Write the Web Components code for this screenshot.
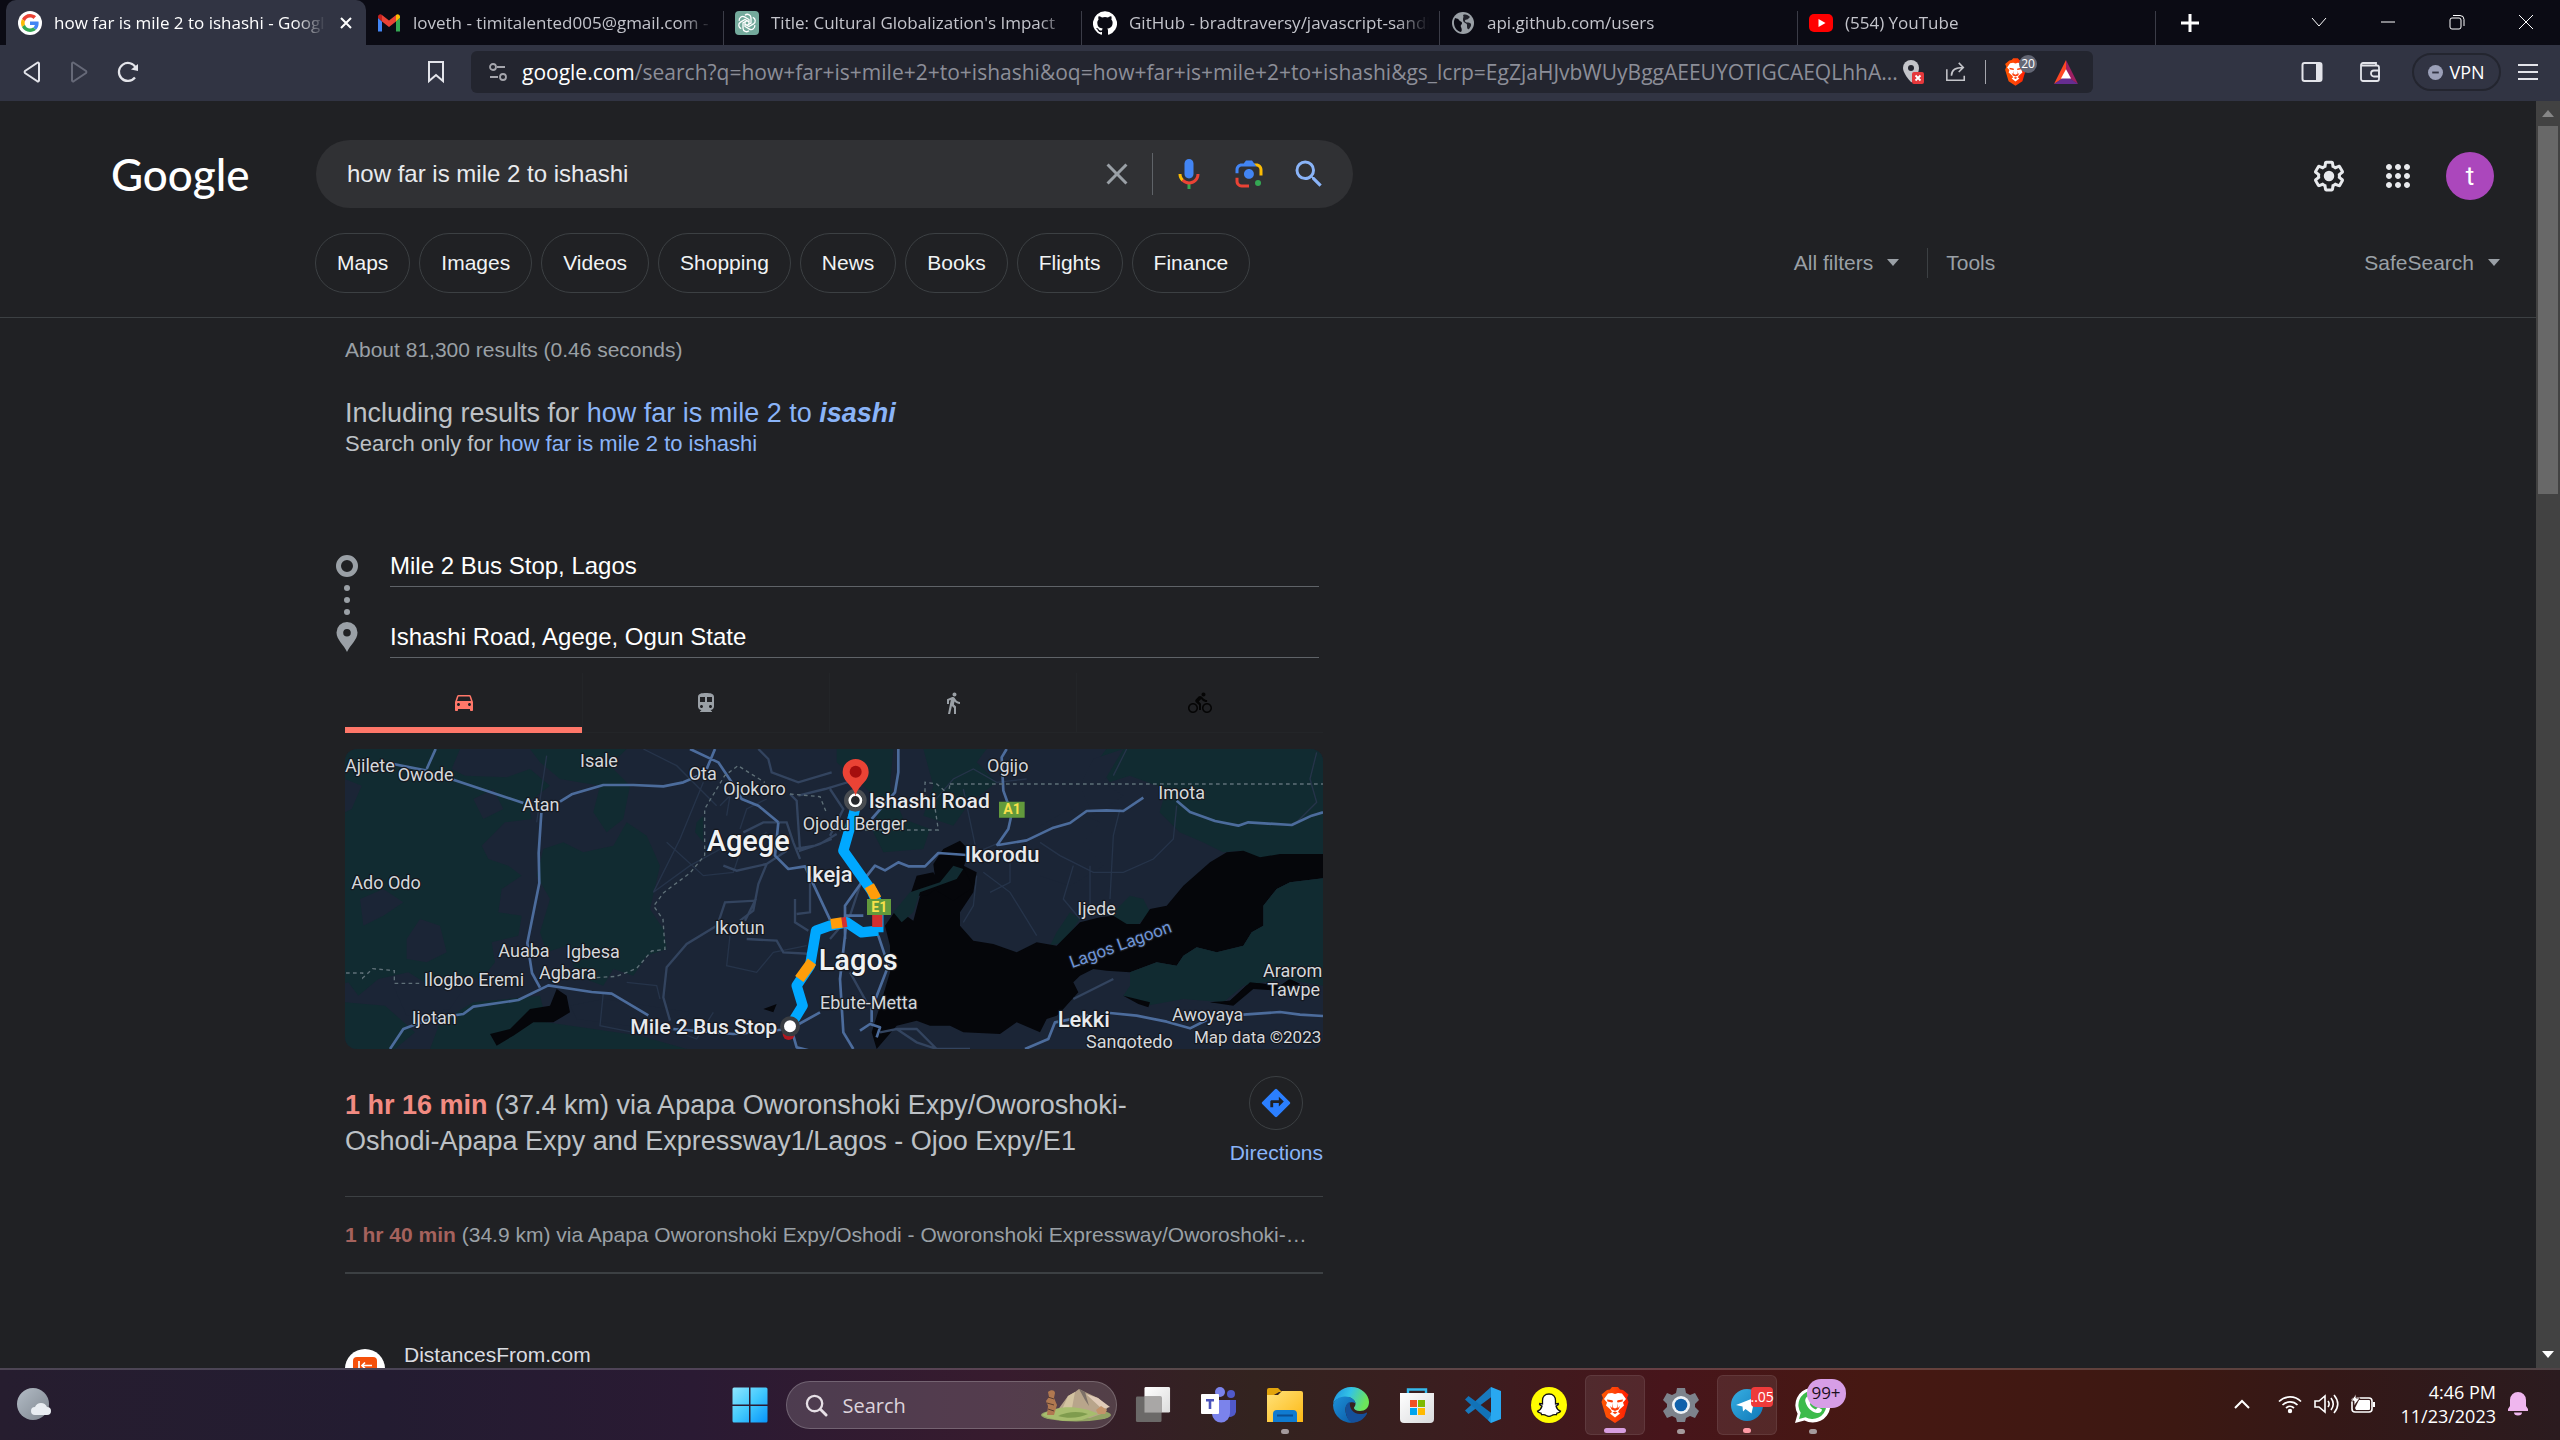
<!DOCTYPE html>
<html lang="en">
<head>
<meta charset="utf-8">
<title>how far is mile 2 to ishashi - Google Search</title>
<style>
html,body{margin:0;height:100%}
body{display:flex;flex-direction:column;height:100vh;overflow:hidden;background:#202124;color:#bdc1c6;font-family:"Liberation Sans",Arial,sans-serif}
</style>
</head>
<body>
<tab-strip></tab-strip>
<address-bar></address-bar>
<page-view></page-view>
<task-bar></task-bar>

<script>
const ICONS = {
google:['0 0 48 48','<circle cx="24" cy="24" r="24" fill="#fff"/><g transform="translate(6 6) scale(.75)"><path fill="#EA4335" d="M24 9.5c3.54 0 6.71 1.22 9.21 3.6l6.85-6.85C35.9 2.38 30.47 0 24 0 14.62 0 6.51 5.38 2.56 13.22l7.98 6.19C12.43 13.72 17.74 9.5 24 9.5z"/><path fill="#4285F4" d="M46.98 24.55c0-1.57-.15-3.09-.38-4.55H24v9.02h12.94c-.58 2.96-2.26 5.48-4.78 7.18l7.73 6c4.51-4.18 7.09-10.36 7.09-17.65z"/><path fill="#FBBC05" d="M10.53 28.59c-.48-1.45-.76-2.99-.76-4.59s.27-3.14.76-4.59l-7.98-6.19C.92 16.46 0 20.12 0 24s.92 7.54 2.56 10.78l7.97-6.19z"/><path fill="#34A853" d="M24 48c6.48 0 11.93-2.13 15.89-5.81l-7.73-6c-2.15 1.45-4.92 2.3-8.16 2.3-6.26 0-11.57-4.22-13.47-9.91l-7.98 6.19C6.51 42.62 14.62 48 24 48z"/></g>'],
gmail:['0 0 24 24','<path fill="#4285F4" d="M1 20.5h4v-10L1 6.8z"/><path fill="#34A853" d="M19 20.5h4V6.8l-4 3.7z"/><path fill="#EA4335" d="M5 10.5V4l7 5.4L19 4v6.500l-7 5.500z"/><path fill="#C5221F" d="M1 6.800v-1C1 3.500 3.600 2.500 5 4v6.500z"/><path fill="#FBBC04" d="M23 6.800v-1C23 3.500 20.400 2.500 19 4v6.500z"/>'],
gpt:['0 0 24 24','<rect width="24" height="24" rx="4" fill="#74aa9c"/><g fill="none" stroke="#fff" stroke-width="1.300"><path d="M10 4.200a3.600 3.600 0 0 1 6 2.600v5.200l-4 2.300"/><path d="M10 4.200a3.600 3.600 0 0 1 6 2.600v5.200l-4 2.300" transform="rotate(60 12 12)"/><path d="M10 4.200a3.600 3.600 0 0 1 6 2.600v5.200l-4 2.300" transform="rotate(120 12 12)"/><path d="M10 4.200a3.600 3.600 0 0 1 6 2.600v5.200l-4 2.300" transform="rotate(180 12 12)"/><path d="M10 4.200a3.600 3.600 0 0 1 6 2.600v5.200l-4 2.300" transform="rotate(240 12 12)"/><path d="M10 4.200a3.600 3.600 0 0 1 6 2.600v5.200l-4 2.300" transform="rotate(300 12 12)"/></g>'],
github:['0 0 24 24','<path fill="#fff" d="M12 .3a12 12 0 0 0-3.800 23.400c.6.1.8-.3.8-.6v-2c-3.300.7-4-1.600-4-1.600-.6-1.400-1.400-1.800-1.400-1.800-1-.7.1-.7.1-.7 1.200 0 1.900 1.200 1.900 1.200 1 1.800 2.800 1.300 3.500 1 0-.8.400-1.300.7-1.600-2.700-.3-5.500-1.300-5.500-6 0-1.200.5-2.300 1.300-3.100-.2-.4-.6-1.600 0-3.200 0 0 1-.3 3.400 1.200a11.500 11.500 0 0 1 6 0c2.300-1.500 3.300-1.200 3.300-1.200.6 1.600.2 2.800 0 3.200.9.8 1.300 1.900 1.300 3.200 0 4.600-2.800 5.600-5.500 5.900.5.400.9 1 .9 2.200v3.300c0 .3.100.7.8.6A12 12 0 0 0 12 .3"/>'],
globe:['0 0 24 24','<circle cx="12" cy="12" r="11" fill="#9aa0a6"/><path fill="#0b0b14" d="M4 7c2 1 3 0 4 2s3 1 3 3-2 2-1 4 1 4 0 5C5 20 2.500 15 3 10z"/><path fill="#0b0b14" d="M12 4c3-1 5 0 7 2l-2 2c-1 1-3 0-3 2s3 1 5 2 1 4-1 6c-2 1-2-2-2-4s-4-2-4-5 1-3 0-5z" opacity=".85"/>'],
youtube:['0 0 24 24','<rect y="3" width="24" height="18" rx="5" fill="#f00"/><path fill="#fff" d="M9.500 8v8l7-4z"/>'],
close:['0 0 16 16','<path d="M3 3l10 10M13 3L3 13" fill="none" stroke="currentColor" stroke-width="2"/>'],
closethin:['0 0 16 16','<path d="M1 1l14 14M15 1L1 15" fill="none" stroke="currentColor"/>'],
plus:['0 0 18 18','<path d="M9 0v18M0 9h18" stroke="currentColor" stroke-width="3"/>'],
chev:['0 0 16 16','<path d="M1 4l7 8 7-8" fill="none" stroke="currentColor"/>'],
min:['0 0 16 16','<path d="M1 8h14" stroke="currentColor"/>'],
restore:['0 0 16 16','<path d="M1 6a2 2 0 0 1 2-2h7a2 2 0 0 1 2 2v7a2 2 0 0 1-2 2H3a2 2 0 0 1-2-2zM4 1.500h7a4 4 0 0 1 4 4V12" fill="none" stroke="currentColor"/>'],
back:['0 0 20 24','<path d="M17 3.500v17a1 1 0 0 1-1.700.7L3 13a1.500 1.500 0 0 1 0-2L15.300 2.800a1 1 0 0 1 1.700.7z" fill="none" stroke="currentColor" stroke-width="2"/>'],
fwd:['0 0 20 24','<path d="M3 3.500v17a1 1 0 0 0 1.700.7L17 13a1.500 1.500 0 0 0 0-2L4.700 2.800A1 1 0 0 0 3 3.500z" fill="none" stroke="currentColor" stroke-width="2"/>'],
reload:['0 0 24 24','<path d="M19 17.500A9 9 0 1 1 20 8" fill="none" stroke="currentColor" stroke-width="2.200"/><path d="M22 4v7l-7-1.500z" fill="currentColor"/>'],
bookmark:['0 0 18 24','<path d="M2 2h14v19l-7-6-7 6z" fill="none" stroke="currentColor" stroke-width="2"/>'],
tune:['0 0 20 20','<g fill="none" stroke="currentColor" stroke-width="1.800"><circle cx="5" cy="5" r="3"/><path d="M9 5h8M2 15h8"/><circle cx="15" cy="15" r="3"/></g>'],
locblock:['0 0 24 26','<path d="M10 1a8 8 0 0 0-8 8c0 5 6 12 8 14s8-9 8-14a8 8 0 0 0-8-8z" fill="#c4c5ca"/><circle cx="10" cy="9" r="3" fill="#23252f"/><rect x="11" y="13" width="12" height="12" rx="2" fill="#e5383b"/><path d="M14.500 16.500l5 5m0-5l-5 5" stroke="#fff" stroke-width="1.800"/>'],
share:['0 0 24 24','<g fill="none" stroke="currentColor" stroke-width="1.700"><path d="M2 9v12h19v-5"/><path d="M7 16c0-7 5-9 13-9M15 2l5 5-5 5"/></g>'],
brave:['0 0 30 36','<defs><linearGradient id="g" x2="1"><stop stop-color="#ff5500"/><stop offset=".45" stop-color="#ff4608"/><stop offset="1" stop-color="#ff1a00"/></linearGradient></defs><path d="M7 3l3-.500L12 0h6l2 2.500 3 .500 5.500 4.500L27 11l1.500 4L24 30l-9 6-9-6L1.500 15 3 11 1.500 7.500z" fill="url(#g)"/><path d="M15 7l3-1 4 .500 4 5.500-3 3.500 1 3-4.500 4-1.500 2.500 2 1.500-5 4-5-4 2-1.500L10.500 22.500 6 18.500l1-3L4 12l4-5.500L12 6z" fill="#fff"/><path d="M7 12.500l5.500.8.500 1.700-1 .5-4.500-1zM23 12.500l-5.500.8-.500 1.700 1 .5 4.500-1zM13 16l-.800 5-2.200-2 1.500 3.500 3.500 1.500 3.500-1.500L20 19l-2.200 2-.800-5v4.500l-2 1-2-1zM12.500 25.500l2.500-1 2.500 1-2.500 1.500z" fill="#fb3f0c"/>'],
bat:['0 0 26 26','<path d="M13 0L0 26l13-8z" fill="#ff4724"/><path d="M13 0l13 26-13-8z" fill="#9e1f63"/><path d="M0 26h26l-13-9z" fill="#662d91"/><path d="M13 10l-5.500 10h11z" fill="#fff"/>'],
sidebar:['0 0 22 22','<rect x="1.500" y="2" width="19" height="18" rx="2" fill="none" stroke="currentColor" stroke-width="2"/><path d="M15 2h5v18h-5z" fill="currentColor"/>'],
wallet:['0 0 22 22','<g fill="none" stroke="currentColor" stroke-width="1.800"><path d="M2 4.500h16a2 2 0 0 1 2 2V18a2 2 0 0 1-2 2H4a2 2 0 0 1-2-2V4a2 2 0 0 1 2-2h13v2"/><path d="M20 9.500h-5a3 3 0 0 0 0 6h5z"/></g>'],
menu:['0 0 20 18','<path d="M0 2h20M0 9h20M0 16h20" stroke="currentColor" stroke-width="2"/>'],
vpn:['0 0 16 16','<circle cx="8" cy="8" r="8" fill="#9ba0b8"/><path d="M4.500 8h7" stroke="#313443" stroke-width="2"/>'],
x:['0 0 24 24','<path fill="currentColor" d="M19 6.410L17.590 5 12 10.590 6.410 5 5 6.410 10.590 12 5 17.590 6.410 19 12 13.410 17.590 19 19 17.590 13.410 12z"/>'],
mic:['0 0 24 24','<path fill="#4285f4" d="M12 15c1.660 0 3-1.310 3-2.970v-7.020c0-1.660-1.340-3.010-3-3.010s-3 1.340-3 3.010v7.020c0 1.660 1.340 2.970 3 2.970z"/><path fill="#34a853" d="M11 18.080h2v3.920h-2z"/><path fill="#fbbc04" d="M7.050 16.870c-1.270-1.330-2.050-2.830-2.050-4.870h2c0 1.450.56 2.420 1.470 3.380v.32l-1.150 1.180z"/><path fill="#ea4335" d="M12 16.930a4.970 5.250 0 0 1-3.540-1.550l-1.410 1.490c1.260 1.340 3.020 2.130 4.950 2.130 3.870 0 6.990-2.920 6.990-7h-1.990c0 2.920-2.240 4.930-5 4.930z"/>'],
lens:['0 0 192 192','<path fill="#4285f4" d="M96 64.910c-17.160 0-31.070 13.910-31.070 31.070S78.840 127.050 96 127.050s31.070-13.910 31.070-31.070S113.160 64.910 96 64.910z" transform="translate(14 14) scale(.85)"/><circle cx="144.070" cy="144" r="16" fill="#34a853"/><path fill="#ea4335" d="M24 135.200c0 18.110 14.690 32.800 32.800 32.800H96v-16l-40.100-.1c-8.800 0-15.900-8.190-15.900-17.900v-18H24v19.200z"/><path fill="#fbbc04" d="M168 72.800c0-18.110-14.690-32.800-32.800-32.800H116l20 16c8.800 0 16 8.290 16 18v30h16V72.800z"/><path fill="#4285f4" d="M112 24l-32 0-12 16H56.800C38.690 40 24 54.690 24 72.800V92h16V74c0-9.710 7.200-18 16-18h80L112 24z"/>'],
search:['0 0 24 24','<path fill="currentColor" d="M15.500 14h-.79l-.28-.27A6.470 6.470 0 0 0 16 9.500 6.500 6.500 0 1 0 9.500 16c1.610 0 3.090-.59 4.230-1.570l.27.28v.79l5 4.990L20.490 19l-4.990-5zm-6 0C7.010 14 5 11.990 5 9.500S7.010 5 9.500 5 14 7.010 14 9.500 11.990 14 9.500 14z"/>'],
gear:['0 0 24 24','<path fill="currentColor" d="M13.850 22.250h-3.700c-.74 0-1.360-.54-1.450-1.270l-.27-1.890c-.27-.14-.53-.29-.79-.46l-1.800.72c-.7.260-1.470-.03-1.810-.65L2.200 15.530c-.35-.66-.2-1.440.36-1.880l1.530-1.190c-.01-.15-.02-.3-.02-.46 0-.15.01-.31.020-.46l-1.520-1.190c-.59-.45-.74-1.260-.37-1.880l1.850-3.190c.34-.62 1.110-.9 1.790-.63l1.810.73c.26-.17.52-.32.78-.46l.27-1.910c.09-.7.71-1.250 1.440-1.250h3.700c.74 0 1.360.54 1.450 1.270l.27 1.890c.27.14.53.29.79.46l1.800-.72c.71-.26 1.480.03 1.820.65l1.840 3.180c.36.66.2 1.440-.36 1.880l-1.520 1.190c.01.15.02.3.02.46s-.01.310-.02.460l1.520 1.190c.56.450.72 1.230.37 1.860l-1.860 3.220c-.34.62-1.110.9-1.800.63l-1.800-.72c-.26.17-.52.32-.78.46l-.27 1.910c-.1.680-.72 1.220-1.460 1.220zm-3.230-2h2.760l.37-2.550.53-.22c.44-.18.88-.44 1.340-.78l.45-.34 2.380.96 1.380-2.400-2.030-1.580.07-.56c.03-.26.06-.51.06-.78s-.03-.53-.06-.78l-.07-.56 2.030-1.580-1.390-2.400-2.390.96-.45-.35c-.42-.32-.87-.58-1.330-.77l-.52-.22-.37-2.550h-2.760l-.37 2.550-.53.21c-.44.19-.88.44-1.340.79l-.45.33-2.380-.95-1.390 2.390 2.030 1.580-.07.560a7 7 0 0 0-.06.790c0 .260.02.530.06.780l.07.560-2.030 1.580 1.380 2.400 2.390-.96.45.350c.43.330.86.580 1.330.77l.53.220.38 2.550z"/><circle cx="12" cy="12" r="3.500" fill="currentColor"/>'],
apps:['0 0 24 24','<path fill="currentColor" d="M6 8c1.100 0 2-.9 2-2s-.9-2-2-2-2 .9-2 2 .9 2 2 2zm6 12c1.100 0 2-.9 2-2s-.9-2-2-2-2 .9-2 2 .9 2 2 2zm-6 0c1.100 0 2-.9 2-2s-.9-2-2-2-2 .9-2 2 .9 2 2 2zm0-6c1.100 0 2-.9 2-2s-.9-2-2-2-2 .9-2 2 .9 2 2 2zm6 0c1.100 0 2-.9 2-2s-.9-2-2-2-2 .9-2 2 .9 2 2 2zm4-8c0 1.100.9 2 2 2s2-.9 2-2-.9-2-2-2-2 .9-2 2zm-4 2c1.100 0 2-.9 2-2s-.9-2-2-2-2 .9-2 2 .9 2 2 2zm6 6c1.100 0 2-.9 2-2s-.9-2-2-2-2 .9-2 2 .9 2 2 2zm0 6c1.100 0 2-.9 2-2s-.9-2-2-2-2 .9-2 2 .9 2 2 2z"/>'],
tri:['0 0 12 8','<path d="M0 0h12L6 7z" fill="currentColor"/>'],
triup:['0 0 12 8','<path d="M0 7h12L6 0z" fill="currentColor"/>'],
car:['0 0 24 24','<path fill="currentColor" d="M18.920 5.010C18.720 4.420 18.160 4 17.500 4h-11c-.66 0-1.210.42-1.420 1.010L3 11v8c0 .55.45 1 1 1h1c.55 0 1-.45 1-1v-1h12v1c0 .55.45 1 1 1h1c.55 0 1-.45 1-1v-8l-2.080-5.990zM6.500 15c-.83 0-1.500-.67-1.500-1.500S5.670 12 6.500 12s1.500.67 1.500 1.500S7.330 15 6.500 15zm11 0c-.83 0-1.500-.67-1.500-1.500s.67-1.500 1.500-1.500 1.500.67 1.500 1.500-.67 1.500-1.500 1.500zM5 10l1.500-4.500h11L19 10H5z"/>'],
train:['0 0 24 24','<path fill="currentColor" d="M12 2c-4.420 0-8 .5-8 4v9.500C4 17.430 5.570 19 7.500 19L6 20.500v.5h12v-.5L16.500 19c1.930 0 3.500-1.570 3.500-3.500V6c0-3.500-3.580-4-8-4zM7.500 17c-.83 0-1.500-.67-1.500-1.500S6.670 14 7.500 14s1.500.67 1.500 1.500S8.330 17 7.500 17zm3.500-6H6V6h5v5zm5.500 6c-.83 0-1.500-.67-1.500-1.500s.67-1.500 1.500-1.500 1.500.67 1.500 1.500-.67 1.500-1.500 1.500zm1.500-6h-5V6h5v5z"/>'],
walk:['0 0 24 24','<path fill="currentColor" d="M13.500 5.500c1.100 0 2-.9 2-2s-.9-2-2-2-2 .9-2 2 .9 2 2 2zM9.800 8.900L7 23h2.100l1.800-8 2.100 2v6h2v-7.500l-2.100-2 .6-3C14.800 12 16.800 13 19 13v-2c-1.900 0-3.500-1-4.300-2.400l-1-1.600c-.4-.6-1-1-1.700-1-.3 0-.5.100-.8.100L6 8.300V13h2V9.600l1.800-.7"/>'],
bike:['0 0 24 24','<path fill="currentColor" d="M15.500 5.500c1.100 0 2-.9 2-2s-.9-2-2-2-2 .9-2 2 .9 2 2 2zM5 12c-2.800 0-5 2.200-5 5s2.200 5 5 5 5-2.200 5-5-2.200-5-5-5zm0 8.500c-1.900 0-3.500-1.600-3.500-3.500s1.600-3.500 3.500-3.500 3.500 1.600 3.500 3.500-1.600 3.500-3.500 3.500zm5.800-10l2.400-2.400.8.800c1.300 1.300 3 2.100 5.100 2.100V9c-1.500 0-2.700-.6-3.600-1.500l-1.900-1.900c-.5-.4-1-.6-1.600-.6s-1.100.2-1.400.6L7.800 8.400c-.4.400-.6.900-.6 1.400 0 .6.200 1.100.6 1.400L11 14v5h2v-6.200l-2.200-2.300zM19 12c-2.800 0-5 2.200-5 5s2.200 5 5 5 5-2.200 5-5-2.200-5-5-5zm0 8.500c-1.900 0-3.500-1.600-3.500-3.500s1.600-3.500 3.500-3.500 3.500 1.600 3.500 3.500-1.600 3.500-3.500 3.500z"/>'],
waypoints:['0 0 22 97','<circle cx="11" cy="11" r="8.500" fill="none" stroke="#9aa0a6" stroke-width="5"/><g fill="#9aa0a6"><circle cx="11" cy="33" r="3"/><circle cx="11" cy="45" r="3"/><circle cx="11" cy="57" r="3"/><path fill-rule="evenodd" d="M11 67a10.500 10.500 0 0 0-10.500 10.500C.5 85 8 90 11 97c3-7 10.500-12 10.500-19.500A10.500 10.500 0 0 0 11 67zm0 7a3.800 3.800 0 1 1 0 7.600 3.800 3.800 0 0 1 0-7.600z"/></g>'],
dir:['0 0 24 24','<path fill="#2b7fff" d="M21.710 11.290l-9-9a1 1 0 0 0-1.410 0l-9 9a1 1 0 0 0 0 1.410l9 9c.39.39 1.020.39 1.410 0l9-9a1 1 0 0 0 0-1.410zM14 14.500V12h-4v3H8v-4c0-.55.45-1 1-1h5V7.500l3.500 3.500-3.500 3.500z"/>'],
dist:['0 0 40 40','<circle cx="20" cy="20" r="20" fill="#fff"/><rect x="8" y="8" width="24" height="24" rx="4" fill="#f4500b"/><path d="M14 12v9M27 16.500H17m3-3l-3 3 3 3" stroke="#fff" stroke-width="1.700" fill="none"/>'],
weather:['0 0 36 34','<defs><linearGradient id="g" y2="1"><stop stop-color="#b3bcc6"/><stop offset="1" stop-color="#7f8790"/></linearGradient></defs><circle cx="16" cy="16" r="16" fill="url(#g)"/><path d="M18 27a4 4 0 0 1 0-8 6.500 6.500 0 0 1 12 0 4 4 0 0 1 0 8z" fill="#e9edf2"/>'],
win:['0 0 36 36','<defs><linearGradient id="g" x2="1" y2="1"><stop stop-color="#8fe6ff"/><stop offset=".5" stop-color="#42c9fd"/><stop offset="1" stop-color="#0795fb"/></linearGradient></defs><path fill="url(#g)" d="M2 .5h15v17H.5V2A1.500 1.500 0 0 1 2 .5zM18.500.5H34A1.500 1.500 0 0 1 35.500 2v15.500h-17zM.5 19H17v16.500H2A1.500 1.500 0 0 1 .5 34zM18.500 19h17v15a1.500 1.500 0 0 1-1.500 1.500H18.500z"/>'],
mag:['0 0 24 24','<circle cx="10" cy="10" r="8" fill="none" stroke="#e6e0e6" stroke-width="2.400"/><path d="M16 16l6 6" stroke="#e6e0e6" stroke-width="3" stroke-linecap="round"/>'],
hills:['0 0 72 34','<ellipse cx="36" cy="27" rx="35" ry="6.500" fill="#93a364"/><path d="M14 27L28 8l7-4 4-3 6 3 13 6 10 9-4 6-14 5z" fill="#b8a58b"/><path d="M39 1l6 3 4 14-4-6z" fill="#7d7168"/><path d="M28 8l7-4-3 16-12 6z" fill="#d3c3a0"/><path d="M46 6l12 4 12 9-8 2z" fill="#e0cbb8"/><path d="M2 27c14-10 38-10 56-1l-16 6c-14 2-32 0-40-5z" fill="#a7bd6e"/><path d="M18 28c10-5 22-5 30-2-8 4-20 5-30 2z" fill="#7f9c4e"/><path d="M8 4c3-3 7-2 7 1l-1 5 3 7-3 10H7l1-9-2-5 3-4z" fill="#b07850"/><path d="M8 9l6 2M7 15l7 2M8 21l6 2" stroke="#5a3d2f"/><path d="M56 22l5-4 6 4-2 4h-7z" fill="#c4946a"/>'],
taskview:['0 0 36 38','<defs><linearGradient id="g" y2="1"><stop stop-color="#fff"/><stop offset="1" stop-color="#dcdcdc"/></linearGradient></defs><rect x="9" width="27" height="27" rx="1.500" fill="url(#g)"/><rect y="10" width="27" height="27" rx="1.500" fill="#6b6968"/><path d="M9 10h18v17H9z" fill="#a9a7a6"/>'],
teams:['0 0 36 36','<circle cx="30" cy="7" r="4" fill="#5059c9"/><path d="M24 13h11v12a6 6 0 0 1-9 4z" fill="#5059c9"/><circle cx="19" cy="5" r="5" fill="#7b83eb"/><path d="M11 13h18v13a9 9 0 0 1-18 1z" fill="#7b83eb"/><rect y="7" width="18" height="20" rx="1" fill="#fff"/><path d="M5 12h8v2.500h-2.700V22H7.700v-7.500H5z" fill="#4b53bc"/>'],
folder:['0 0 36 36','<defs><linearGradient id="g" x2="1" y2="1"><stop stop-color="#ffe27a"/><stop offset="1" stop-color="#fdb813"/></linearGradient></defs><path d="M0 3a2 2 0 0 1 2-2h9l4 4h-3L0 12z" fill="#e2a40c"/><path d="M0 8h11l4-4h19a2 2 0 0 1 2 2v29H0z" fill="url(#g)"/><path d="M6 35V27a4 4 0 0 1 4-4h16a4 4 0 0 1 4 4v8z" fill="#0f7bd1"/><path d="M10 28.500h16" stroke="#0a4f93" stroke-width="2"/>'],
edge:['0 0 36 36','<defs><linearGradient id="g" x2="1" y2=".3"><stop stop-color="#1b8de0"/><stop offset=".5" stop-color="#33c3e6"/><stop offset="1" stop-color="#6ce45a"/></linearGradient><linearGradient id="h" y2="1"><stop stop-color="#1c90d8"/><stop offset="1" stop-color="#0c59a4"/></linearGradient></defs><path d="M0 17C1 7 9 0 18 0c11 0 18 8 18 15 0 6-4 9-9 9-4 0-6-1.500-6-3 0-1.200 1.500-1.500 1.500-4.500 0-3-4-6.500-9-6.500S2 12 0 17z" fill="url(#g)"/><path d="M0 18c1-5 6-8.500 12-8.500 6 0 10.500 3.500 10.500 7-3-2.500-10-1-10 6C12.500 30 17 36 23 35A18 18 0 0 1 0 18z" fill="url(#h)"/><path d="M12.500 22c0-4 2-6.500 4.500-7-1 6 3 12 10 12 3 0 5-.5 6.500-1.500 1 0 .5 1 0 2-3 5-8 8-13 8s-8-7-8-13.500z" fill="#154f9a"/>'],
store:['0 0 36 36','<defs><linearGradient id="g" y2="1"><stop stop-color="#fff"/><stop offset="1" stop-color="#d9dadc"/></linearGradient></defs><path d="M9 8V2.500h18V8" fill="none" stroke="#35b9ec" stroke-width="2.400"/><path d="M1 6h34v26a4 4 0 0 1-4 4H5a4 4 0 0 1-4-4z" fill="url(#g)"/><path d="M11 13h7v7h-7z" fill="#f25022"/><path d="M19 13h7v7h-7z" fill="#7fba00"/><path d="M11 21h7v7h-7z" fill="#00a4ef"/><path d="M19 21h7v7h-7z" fill="#ffb900"/>'],
vscode:['0 0 36 36','<path d="M26 0L0 23.500l3.500 3.500L29 8z" fill="#1879bd"/><path d="M26 36L0 12.500 3.500 9 29 28z" fill="#1172b8"/><path d="M26 0l10 4v28l-10 4z" fill="#29a8f0"/><path d="M26 0v36l-3-3 3-5V8z" fill="#1e96dd"/>'],
snap:['0 0 36 36','<circle cx="18" cy="18" r="18" fill="#fffc00"/><path d="M18 7c4.500 0 6.500 3.300 6.500 6.500v3.500l2.800-.5c.8 1-1 2-2.300 2.500.8 3 2.500 4.500 4.500 5.200-.2 1.300-2 1.600-3.500 1.900l-.6 1.600c-2-.3-3.400-.2-4.600.8-1.500 1-4.100 1-5.600 0-1.200-1-2.600-1.100-4.600-.8l-.6-1.600c-1.500-.3-3.300-.6-3.500-1.900 2-.7 3.700-2.200 4.500-5.200-1.300-.5-3.100-1.500-2.300-2.500l2.800.5v-3.500C11.500 10.300 13.500 7 18 7z" fill="#fff" stroke="#111" stroke-width="1.300"/>'],
settings:['0 0 36 36','<path d="M14 1h8l1 5 4 2 5-2 4 7-4 4v3l4 4-4 7-5-2-4 2-1 4h-8l-1-4-4-2-5 2-4-7 4-4v-3L0 13l4-7 5 2 4-2z" fill="#7d838c"/><circle cx="18" cy="18" r="9" fill="#eef2f6"/><circle cx="18" cy="18" r="6.300" fill="#1061ab"/>'],
telegram:['0 0 36 36','<defs><linearGradient id="g" y2="1"><stop stop-color="#37aee2"/><stop offset="1" stop-color="#1079b8"/></linearGradient></defs><circle cx="18" cy="18" r="16" fill="url(#g)"/><path d="M7 18l19-7.500-3.500 16-6-4.500-2.500 2.500-.5-5z" fill="#fff"/>'],
whatsapp:['0 0 36 36','<path d="M0 36l2.600-9.300A17.500 17.500 0 1 1 9.500 33.500z" fill="#fff"/><path d="M4 32l1.700-6.300A14 14 0 1 1 10.500 30.200z" fill="#3dbb4b"/><path d="M13 9.500c-1 0-3.500 2-2.500 5.500 1.500 5.500 6 10 11.500 11 3 .5 5-1.500 5-3.500l-4-2.200-2.200 2.200c-3-1-5-3-6-5.500l2-2.200-1.800-5.300z" fill="#fff"/>'],
up:['0 0 18 12','<path d="M2 10l7-7 7 7" fill="none" stroke="#fff" stroke-width="2"/>'],
wifi:['0 0 24 20','<g fill="none" stroke="#fff" stroke-width="1.700"><path d="M1 7.500a15.500 15.500 0 0 1 22 0M4.500 11a10.500 10.500 0 0 1 15 0M8 14a6 6 0 0 1 8 0"/></g><circle cx="12" cy="17" r="2.200" fill="#fff"/>'],
vol:['0 0 25 20','<g fill="none" stroke="#fff" stroke-width="1.600"><path d="M1 7h4l6-5v16l-6-5H1z"/><path d="M14 7c1.500 2 1.500 4 0 6M17 4c3 4 3 8 0 12M20 1c5 6 5 12 0 18"/></g>'],
batt:['0 0 24 20','<rect x="1" y="4" width="20" height="14" rx="3" fill="none" stroke="#fff" stroke-width="1.600"/><path d="M8 6h10a1 1 0 0 1 1 1v8a1 1 0 0 1-1 1H5l-1-2zM22 8h2v5h-2z" fill="#fff"/><path d="M5 0L0 7h3v5l6-8H5z" fill="#fff" stroke="#351817" stroke-width=".8"/>'],
bell:['0 0 20 24','<path d="M10 0a8 8 0 0 0-8 8v6l-2 3v2h20v-2l-2-3V8a8 8 0 0 0-8-8zM6 20.500h8a4 3 0 0 1-8 0z" fill="#efb6ee"/>']
};

const define = (name, markup) => customElements.define(name, class extends HTMLElement {
  connectedCallback() {
    if (this.shadowRoot) return;
    const t = document.createElement('template');
    t.innerHTML = '<style>:host,*{box-sizing:border-box}button,input{font:inherit;color:inherit;background:none;border:0;padding:0;margin:0;outline:0}a{color:inherit;text-decoration:none}</style>'
      + (typeof markup === 'function' ? markup(this) : markup);
    this.attachShadow({ mode: 'open' }).append(t.content.cloneNode(true));
  }
});

define('x-icon', el => {
  const [box, art] = ICONS[el.getAttribute('name')];
  const w = el.getAttribute('w'), h = el.getAttribute('h') || w;
  return `<style>:host{display:block;flex:none;width:${w}px;height:${h}px}svg{display:block;width:100%;height:100%}</style><svg viewBox="${box}" aria-hidden="true">${art}</svg>`;
});

define('browser-tab', el => `<style>
:host{display:flex;align-items:center;gap:12px;width:358px;height:45px;padding:0 11px;color:#c3c4cb;font-size:17px;position:relative}
:host([active]){background:#313443;color:#fff;border-radius:10px 10px 0 0;width:360px;padding:0 12px}
:host([sep])::after{content:"";position:absolute;right:0;top:11px;bottom:0;width:1px;background:#3b3c47}
.t{flex:1;min-width:0;overflow:hidden;white-space:nowrap;line-height:26px;-webkit-mask:linear-gradient(90deg,#000 calc(100% - 32px),transparent)}
button{width:16px;height:16px}
</style><x-icon name="${el.getAttribute('icon')}" w="24"></x-icon><span class="t"><slot></slot></span>${el.hasAttribute('active') ? '<button aria-label="Close tab"><x-icon name="close" w="16"></x-icon></button>' : ''}`);

define('tab-strip', `<style>
:host{display:flex;flex:none;height:45px;background:#0b0b14;padding-left:6px;color:#fff;font-family:"Open Sans","Noto Sans",sans-serif}
.new{margin:0 24px}.win{margin-left:auto;display:flex}
button{display:grid;place-items:center;height:43px}.new{width:20px;height:45px}.win button{width:69px}
</style>
<browser-tab active icon="google">how far is mile 2 to ishashi - Google Search</browser-tab>
<browser-tab sep icon="gmail">loveth - timitalented005@gmail.com - Gmail</browser-tab>
<browser-tab sep icon="gpt">Title: Cultural Globalization's Impact</browser-tab>
<browser-tab sep icon="github">GitHub - bradtraversy/javascript-sandbox</browser-tab>
<browser-tab sep icon="globe">api.github.com/users</browser-tab>
<browser-tab sep icon="youtube">(554) YouTube</browser-tab>
<button class="new" aria-label="New tab"><x-icon name="plus" w="18"></x-icon></button>
<div class="win"><button aria-label="Search tabs"><x-icon name="chev" w="16"></x-icon></button><button aria-label="Minimize"><x-icon name="min" w="16"></x-icon></button><button aria-label="Restore"><x-icon name="restore" w="16"></x-icon></button><button aria-label="Close"><x-icon name="closethin" w="16"></x-icon></button></div>`);

define('address-bar', `<style>
:host{display:flex;align-items:center;flex:none;height:56px;padding:0 22px 2px;background:#313443;color:#e3e4ea;font-family:"Open Sans","Noto Sans",sans-serif;font-size:21px}
nav{display:flex;gap:27px;align-items:center}
nav button:nth-child(2){color:#666978}
.bm{margin-left:287px}
.url{display:flex;align-items:center;flex:1;height:42px;margin:0 208px 0 26px;padding:0 14px 0 17px;background:#23252f;border-radius:6px}
.url>x-icon{color:#a5a6ad}
.host{margin-left:14px;color:#fff}
input{flex:1;min-width:0;color:#8c8e98;height:42px}
.acts{display:flex;align-items:center;gap:20px;color:#c4c5ca}
.div{width:1px;height:24px;background:#a5a6ad;margin:0 -2px}
.shield{position:relative;margin-right:6px}
.badge{position:absolute;left:15px;top:-3px;width:18px;height:18px;border-radius:9px;background:#636775;color:#fff;font-size:12px;line-height:18px;text-align:center}
.right{display:flex;align-items:center}
.right button:nth-child(2){margin:0 31px 0 36px}
.vpn{display:flex;align-items:center;gap:6px;height:38px;width:89px;justify-content:center;border:2px solid #23252f;border-radius:19px;font-size:18px;color:#fff;margin:0 17px 0 0}
</style>
<nav><button aria-label="Back"><x-icon name="back" w="20" h="24"></x-icon></button><button aria-label="Forward"><x-icon name="fwd" w="20" h="24"></x-icon></button><button aria-label="Reload"><x-icon name="reload" w="24"></x-icon></button></nav>
<button class="bm" aria-label="Bookmark this page"><x-icon name="bookmark" w="18" h="24"></x-icon></button>
<div class="url"><x-icon name="tune" w="20"></x-icon><label class="host" for="u">google.com</label><input id="u" value="/search?q=how+far+is+mile+2+to+ishashi&amp;oq=how+far+is+mile+2+to+ishashi&amp;gs_lcrp=EgZjaHJvbWUyBggAEEUYOTIGCAEQLhhA...">
<div class="acts"><x-icon name="locblock" w="24" h="26"></x-icon><button aria-label="Share"><x-icon name="share" w="22"></x-icon></button><span class="div"></span><button class="shield" aria-label="Brave Shields"><x-icon name="brave" w="23" h="28"></x-icon><span class="badge">20</span></button><button aria-label="Brave Rewards"><x-icon name="bat" w="26" h="24"></x-icon></button></div></div>
<div class="right"><button aria-label="Sidebar"><x-icon name="sidebar" w="22"></x-icon></button><button aria-label="Wallet"><x-icon name="wallet" w="22"></x-icon></button><button class="vpn"><x-icon name="vpn" w="15"></x-icon>VPN</button><button aria-label="Menu"><x-icon name="menu" w="20" h="18"></x-icon></button></div>`);

define('filter-chip', `<style>:host{display:block}a{display:flex;align-items:center;height:60px;padding:0 21px;border:1px solid #3c4043;border-radius:30px;color:#f1f3f4;font-size:21px}</style><a href="#"><slot></slot></a>`);

define('search-header', `<style>
:host{display:block;padding-top:39px;border-bottom:1px solid #3c4043;font-size:21px}
.top{display:flex;align-items:center;height:68px}
.logo{width:205px;margin-left:111px;color:#fff;font:500 44px/50px Lato,sans-serif}
form{display:flex;align-items:center;width:1037px;height:68px;padding:0 26px 0 31px;background:#303134;border-radius:34px}
input{flex:1;min-width:0;height:60px;font-size:24px;color:#e8eaed}
.sep{width:1px;height:42px;background:#5f6368;margin:0 18px 0 17px}
.clear{color:#9aa0a6}.lens{margin:0 24px}.go{color:#8ab4f8}
.acct{display:flex;align-items:center;margin:4px 42px 0 auto;color:#e8eaed}
.acct button{margin-right:33px}
.av{display:grid;place-items:center;width:48px;height:48px;border-radius:24px;background:#ab47bc;color:#fff;font:26px Roboto,sans-serif;margin-left:-3px}
.filters{display:flex;align-items:center;gap:9px;margin:25px 0 24px 315px;color:#9aa0a6}
.all{display:flex;align-items:center;gap:14px}
.all:first-of-type{margin-left:auto}.all:last-of-type{margin:0 36px 0 360px}
.vd{width:1px;height:30px;background:#3c4043;margin:0 9px 0 19px}
</style>
<div class="top"><a class="logo" href="#">Google</a>
<form role="search"><input aria-label="Search" value="how far is mile 2 to ishashi"><button type="button" class="clear" aria-label="Clear"><x-icon name="x" w="36"></x-icon></button><span class="sep"></span><button type="button" aria-label="Search by voice"><x-icon name="mic" w="36"></x-icon></button><button type="button" class="lens" aria-label="Search by image"><x-icon name="lens" w="36"></x-icon></button><button type="button" class="go" aria-label="Google Search"><x-icon name="search" w="36"></x-icon></button></form>
<div class="acct"><button aria-label="Quick settings"><x-icon name="gear" w="36"></x-icon></button><button aria-label="Google apps"><x-icon name="apps" w="36"></x-icon></button><span class="av">t</span></div></div>
<div class="filters"><filter-chip>Maps</filter-chip><filter-chip>Images</filter-chip><filter-chip>Videos</filter-chip><filter-chip>Shopping</filter-chip><filter-chip>News</filter-chip><filter-chip>Books</filter-chip><filter-chip>Flights</filter-chip><filter-chip>Finance</filter-chip>
<button class="all">All filters<x-icon name="tri" w="12" h="8"></x-icon></button><span class="vd"></span><button>Tools</button><button class="all">SafeSearch<x-icon name="tri" w="12" h="8"></x-icon></button></div>`);

define('route-map', `<style>
:host{display:block;border-radius:12px;overflow:hidden}
svg{display:block;width:100%;height:auto}
text{font-family:Roboto,sans-serif;font-size:54px;fill:#d5d8dc;stroke:#15181f;stroke-width:7px;paint-order:stroke;stroke-linejoin:round}
.m{font-weight:500;font-size:66px;fill:#e8eaed}.s{font-weight:500;font-size:63px;fill:#e8eaed}.l{font-weight:500;font-size:87px;fill:#f1f3f4}.c{font-size:51px}
.r{fill:none;stroke:#4c6c9c;stroke-width:8;stroke-linejoin:round}.n{fill:none;stroke:#33445f;stroke-width:7}.k{fill:none;stroke:#26344a;stroke-width:4}
.g{fill:#112b31}.w{fill:#05060a}.b{fill:#1b2536}.d{fill:none;stroke:#5f7078;stroke-width:4;stroke-dasharray:11 10}
.rt{fill:none;stroke-width:31;stroke-linejoin:round}
.sh{font-weight:700;font-size:42px;fill:#f7e04b;stroke:none}
</style>
<svg viewBox="45 30 2934 900" role="img" aria-label="Map of the driving route from Mile 2 Bus Stop to Ishashi Road">
<path class="b" d="M45 30h2934v900H45z"/>
<path class="g" d="M45 30H390l-25 60 40 20 125 5 70-25 60 50-65 50 10 50-80 10-70 70 20 40 60 20 40 30-60 40-10 70 70 10-10 60-80 20 10 60-40 50-90-10-50 40-80-50-90 20-60 50-30-40-65 20z"/>
<path class="g" d="M640 330l60-20 60 30 90-20 40-70 60 40 40 90-30 130 40 60 10 60-60 20-40 60-60-20-30 50-80-30-30-90-60 20-20-60 30-100-40-70zM600 30h290l-50 50 60 60-20 100-50 40-40-60 20-80-120-20-60-50zM1100 250l20-20v80l-25-30z"/>
<path class="b" d="M45 120l50 20-30 70-20 10zM90 480l70-30 60 40-60 40-60 30zM230 600l40-60 60 20 20 80-60 30-60-10zM430 180l60-30 30 60-60 30z"/>
<path class="g" d="M45 790l120 10 90 80-60 50H45zM330 850l100-60 200-20 20 80 280 40 140 40H300z"/>
<path class="b" d="M190 740l80-10 130 20-40 60-130 20zM720 800l100-20 260 40-40 60-300-40z"/>
<path class="g" d="M1520 30h170l-10 110 40 100 80 30-20 60-120 10-30-60 20-90-60-60-70-60zM1780 30h190l-30 40 60 60-80 60-50 70-90-30 30-90zM2120 30h859v330l-140-10-50 10-60-25-50 5-60-30-70-30-60-60 20-70-110-40-60 20-40-60 60-80-120-30-80 30-60-40z"/>
<path class="b" d="M2290 60l90-30-60 100 60 40-90 60-40-90zM2130 260l90-50 90 40-50 60 60 70-100 60-90-30z"/>
<path class="g" d="M2340 530l60-60 40 10 20 40-40 40-60-10zM2180 580l40-60 30 20-50 70-40 10z"/>
<path class="w" d="M1640 930l-15-50 25-80 30-100v-80l-15-60 35-50 50 35 20-75 90-40 20-60 60 30-10 60-40 60v40l40 45 60 10 70 25 60-30 60 10 70-70 60-15 40-5 40 25h40l30-45 50-10 50-60 80-70 50-30 50-5 50 20 60-10h129v73l-99 12-40 20-40 50v60l-35 20-25 40-80 20-60-15-40 25-20 30-60-10-80 30-70-5-40-5-40 20-20 20 15 30-45 50-20 20-30 10-20 40-70-30-50 35-110-5-40-20h-60l-40-15-60 15z"/>
<path class="w" d="M1810 375l30-45 50-25 30 30-20 50 30 60-60 40-50-30zM1740 470l20-60 50-10 20 40-40 30zM480 885l60-15 60-60 60-10 20-50 30 20 10 50-50 30-60 0-60 40-50 30zM1300 810l40-15-10 25zM2640 790l60-5 60-55 90 10 30-20 30 15-60 20-80-5-60 50z"/>
<path class="g" d="M1690 520l50-60 90-30 40-50 30 10-20 30-110 40-20 60-35 30z"/>
<path class="g" d="M2400 700l80-30 60 10 20-30 40-25 60 15 80-20 25-40 35-20v-60l40-50 40-20 99-12v322l-119-20-120 20-60 50-120-10-110 20-70-30 20-30z"/>
<path class="w" d="M2380 770l40 10 40 10-5 15-30-10zM2640 790l60-5 60-55 90 10 30-20 30 15-60 15-80-5-60 50z"/>
<path class="k" d="M940 30l100 50 120 120M1120 130l-70 170-80 160 110-80 110-60M1010 310l110 100 90-10 20-60 80-60M1190 230l10-60-30 30M1230 270l20-60 60-30M1200 590l-10 90 90 20 50-60 100-20M820 760l-10 100 100 20 30-40 160 60 50-80M890 730l90 10 10 40M1810 190l60-70 60-30 70 40 90-10M1900 150l40 190 70-30M1940 410l-10 90-30 50M1960 400l80 60 80 130M2040 370v60l-60 30M2130 310l60 40 100 50 90 0 90-40 60-60 10-100M2230 380l-30 100 50 60M2280 380v140M2370 210l-20 80-10 190M2350 110l40-80M2960 40l-20 80 20 70-60 60M620 250l30-200"/>
<path class="n" d="M1285 30l30 30 10 40 80 30 100-30M1380 165l20 20 10 150 60-20 50-30M1405 170l80-20 100-30M1180 380l40 15 90-20 60-40M1240 280l60-30 70 0 20 60 20 50M1395 480v70l40 25M1440 430v90l-40 5M1310 375l-25 60-15 80-40 30M1165 550l20-60 90-5-30 60M1250 600l90 5 20 35 90 5M1160 560l-90 55-60 70-10 90 20 70M1395 330l60-10 50-20M1500 600l60-70 30-90M1560 700l50 90M1650 880l50-10 60 40 60 20 100 0M1700 870l60 0 60 60M2230 780l60-30 60-30M1500 290l40-80-40-60"/>
<path class="r" d="M190 75l100 20M290 90l27-60M370 122l210 70M690 188l35-22 95-28 90 0 90 4 60-12 50-22M1080 30l85 40 40 60 30 50 50 20 60 50M1345 250l-10 100 40 40 50-8 75 160M1130 90l25-60M634 222l-8 120 2 90-16 80-20 100 14 90 24 44M180 930l40-60 80-30 100-15 30-22 135-20 90-44 130 20 60 5 110 65M1030 870l180 15 170-15 90-50M1390 890l10 35 40 10M1600 530l-50 0-5 60-15 130 10 160 30 50M1645 590l30 90-50 130 0 40M1545 600V500l50-70 40-50 30 14 40-24 30 12h50l40-40 85 6M1590 875l30-20 30 10-10 30M1705 30v70l-10 60-70 80M2030 30l-15 25 5 100 25 70-10 45-35 50M2005 318l85-14 80-38 50-14 50-36 60-2 50 2 60-40M2540 185l40 34 75 27 70 14 30-10 130 8 60-28 34-10M2085 930l70-30 20-50 100-20M2340 822l80 8 90 18 70 20 50-25M2740 827l110-8 60 8 69 4"/>
<path class="d" d="M48 702h50v15l30-28 65 6v38h80M800 716l60-4 60-24 45-52 40-5-6-90-28-40 30-40 80-60 43-52V210l60-100 40-30 80 50M1380 165l90 8 20 50M1860 135h1119M1785 180v-50l35 5 35 30 5-30M1500 273h325l-15-100"/>
<path class="rt" stroke="#00a8ff" d="M1380 862l38-62-18-60 40-60 18-105 42-15 50-10 45 30 50-5M1645 580V500l-20-45-85-120 30-105 5-20"/>
<path class="rt" stroke="#ff9d0a" d="M1408 720l38-52M1503 555l34-5M1640 480l-22-40"/>
<path class="rt" stroke="#d32f2f" d="M1536 551l14-2M1642 564v-40"/>
<path d="M1611 480h72v48h-72zM2007 188h77v48h-77z" fill="#629a3c"/>
<circle cx="1376" cy="885" r="18" fill="#b01820"/>
<circle cx="1380" cy="862" r="24" fill="#fff" stroke="#3a3d42" stroke-width="12"/>
<circle cx="1576" cy="184" r="28" fill="#222" stroke="#4a4d52" stroke-width="12"/><circle cx="1576" cy="184" r="17" fill="#26282c" stroke="#fff" stroke-width="8"/>
<path d="M1577 172c-6-34-39-42-39-73a39 39 0 0 1 78 0c0 31-33 39-39 73z" fill="#ea4335"/><circle cx="1577" cy="98" r="18" fill="#a50e0e"/>
<text x="45" y="98">Ajilete</text><text x="203" y="125">Owode</text><text x="750" y="85">Isale</text><text x="1076" y="122">Ota</text><text x="1180" y="167">Ojokoro</text><text x="577" y="216">Atan</text><text x="1418" y="274">Ojodu Berger</text><text x="64" y="449">Ado Odo</text><text x="1154" y="585">Ikotun</text><text x="505" y="654">Auaba</text><text x="708" y="656">Igbesa</text><text x="627" y="720">Agbara</text><text x="281" y="742">Ilogbo Eremi</text><text x="245" y="854">Ijotan</text><text x="1470" y="810">Ebute-Metta</text><text x="1971" y="99">Ogijo</text><text x="2485" y="180">Imota</text><text x="2242" y="527">Ijede</text><text x="2799" y="715">Ararom</text><text x="2812" y="770">Tawpe</text><text x="2526" y="847">Awoyaya</text><text x="2268" y="927">Sangotedo</text><text class="c" x="2592" y="912">Map data ©2023</text>
<text class="l" x="1130" y="335">Agege</text><text class="l" x="1466" y="693">Lagos</text>
<text class="m" x="1428" y="428">Ikeja</text><text class="m" x="1904" y="368">Ikorodu</text><text class="m" x="2183" y="864">Lekki</text>
<text class="s" x="901" y="885">Mile 2 Bus Stop</text><text class="s" x="1616" y="207">Ishashi Road</text>
<text class="c" x="2226" y="688" style="fill:#6f95d6" transform="rotate(-20 2226 688)">Lagos Lagoon</text>
<text class="sh" x="1624" y="518">E1</text><text class="sh" x="2020" y="226">A1</text>
</svg>`);

define('travel-modes', `<style>
:host{display:grid;grid-template-columns:237fr 247fr 247fr 247fr;height:60px;margin:15px 0 16px;color:#9aa0a6}
button{display:grid;place-items:center;border-left:1px solid #232528;border-bottom:1px solid #232528}
.on{color:#ff7769;border-left:0;border-bottom:6px solid #ff7769;padding-top:5px}
.off{color:#050505}
</style><button class="on" aria-label="Driving"><x-icon name="car" w="24"></x-icon></button><button aria-label="Transit"><x-icon name="train" w="24"></x-icon></button><button aria-label="Walking"><x-icon name="walk" w="24"></x-icon></button><button class="off" aria-label="Cycling"><x-icon name="bike" w="24"></x-icon></button>`);

define('directions-card', `<style>
:host{display:block;margin-top:87px}
.pts{display:flex;gap:32px;margin:0 4px 0 -9px}
.pts x-icon{margin-top:10px}
.f{flex:1;display:flex;flex-direction:column;gap:29px}
input{display:block;width:100%;height:42px;border-bottom:1px solid #5f6368;font-size:24px;color:#fff}
.main{display:flex;justify-content:space-between;margin-top:27px;padding-bottom:31px;border-bottom:1px solid #3c4043}
h2{margin:11px 0 0;font:27px/36px "Liberation Sans",Arial,sans-serif;width:800px;color:#bdc1c6}
h2 b{color:#f28b82}
.go{color:#8ab4f8;font-size:21px;line-height:24px;text-align:center}
.go span{display:grid;place-items:center;width:54px;height:54px;margin:0 auto 11px;border:1px solid #3c4043;border-radius:27px}
.alt{height:77px;line-height:75px;font-size:21px;color:#9aa0a6;white-space:nowrap;overflow:hidden;text-overflow:ellipsis;border-bottom:2px solid #3c4043}
.alt b{color:#a5625d}
</style>
<div class="pts"><x-icon name="waypoints" w="22" h="97"></x-icon><div class="f"><input aria-label="Starting point" value="Mile 2 Bus Stop, Lagos"><input aria-label="Destination" value="Ishashi Road, Agege, Ogun State"></div></div>
<travel-modes></travel-modes><route-map></route-map>
<div class="main"><h2><b>1 hr 16 min</b> (37.4 km) via Apapa Oworonshoki Expy/Oworoshoki-Oshodi-Apapa Expy and Expressway1/Lagos - Ojoo Expy/E1</h2><a class="go" href="#"><span><x-icon name="dir" w="34"></x-icon></span>Directions</a></div>
<div class="alt"><b>1 hr 40 min</b> (34.9 km) via Apapa Oworonshoki Expy/Oshodi - Oworonshoki Expressway/Oworoshoki-…</div>`);

define('search-result', `<style>
:host{display:flex;gap:19px;align-items:center;height:51px;margin-top:69px}
a{align-self:flex-start;font-size:21px;line-height:24px;color:#dadce0}
</style><x-icon name="dist" w="40"></x-icon><a href="#"><slot></slot></a>`);

define('page-view', `<style>
:host{display:flex;flex:1;min-height:0;background:#202124}
main{flex:1;min-width:0;overflow:hidden}
.col{width:978px;margin-left:345px}
.stats{margin:17px 0 31px;font-size:21px;line-height:30px;color:#9aa0a6}
.inc{font-size:27px;line-height:34px}.only{font-size:22px;line-height:28px}
.col p{margin:0}p a{color:#8ab4f8}
.bar{display:flex;flex-direction:column;align-items:center;width:24px;background:#424242;color:#868686}
.bar x-icon{margin:9px 0 8px}
.thumb{width:20px;height:368px;background:#686868}
.bar x-icon:last-child{margin:auto 0 9px;color:#fff}
</style>
<main><search-header></search-header><div class="col"><div class="stats">About 81,300 results (0.46 seconds)</div>
<p class="inc">Including results for <a href="#">how far is mile 2 to <b><i>isashi</i></b></a></p><p class="only">Search only for <a href="#">how far is mile 2 to ishashi</a></p>
<directions-card></directions-card><search-result>DistancesFrom.com</search-result></div></main>
<div class="bar"><x-icon name="triup" w="12" h="8"></x-icon><div class="thumb"></div><x-icon name="tri" w="12" h="8"></x-icon></div>`);

define('task-item', el => `<style>
:host{display:block;position:relative;width:60px;height:60px;border-radius:6px}
:host([boxed]){background:rgba(255,255,255,.08);border:1px solid rgba(255,255,255,.08)}
button{display:grid;place-items:center;width:100%;height:100%}
:host([run])::after{content:"";position:absolute;left:50%;bottom:1px;width:8px;height:5px;margin-left:-4px;border-radius:3px;background:#a49a9c}
:host([run=wide])::after{width:22px;margin-left:-11px;background:#d79ee0}
:host([run=alert])::after{background:#ff99a4}
.b{position:absolute;z-index:1;font:16px/18px "Open Sans",sans-serif}
.red{left:33px;top:11px;width:22px;height:20px;border-radius:4px;background:#ee3b3b;color:#fff;font-size:14px;text-align:center;line-height:20px}
.pur{left:24px;top:4px;width:39px;height:29px;border-radius:14px;background:#d79ee6;color:#1c1020;line-height:28px;text-align:center;font-size:17px}
</style><button aria-label="${el.getAttribute('label')}"><x-icon name="${el.getAttribute('icon')}" w="${el.getAttribute('w') || 36}" h="36"></x-icon></button>${el.hasAttribute('red') ? `<span class="b red">${el.getAttribute('red')}</span>` : ''}${el.hasAttribute('badge') ? `<span class="b pur">${el.getAttribute('badge')}</span>` : ''}`);

define('task-bar', `<style>
:host{display:grid;grid-template-columns:1fr auto 1fr;align-items:center;flex:none;height:72px;border-top:2px solid rgba(255,255,255,.18);background:linear-gradient(90deg,#261d2f 0,#231c31 15%,#2a1a33 27%,#371b2e 39%,#33231f 49%,#3b1d1f 57%,#47151b 65%,#461812 73%,#3c1812 85%,#341817 91%,#2b1b1f 100%);background-origin:border-box;color:#fff;font-family:"Open Sans","Noto Sans",sans-serif}
.w{margin-left:17px}
.mid{display:flex;align-items:center;gap:6px;padding-left:2px}
.s{display:flex;align-items:center;gap:15px;width:331px;height:48px;padding:0 4px 0 18px;border:1px solid rgba(255,255,255,.2);border-radius:24px;background:rgba(255,255,255,.15)}
.s input{flex:1;min-width:0;font-size:20px;color:#dcd3dc}.s input::placeholder{color:#dcd3dc;opacity:1}
.tray{display:flex;align-items:center;justify-content:flex-end;gap:12px;padding:0 32px 2px 0}
.tray>x-icon:first-child{margin-right:15px}
.clock{margin-left:13px;text-align:right;font-size:18px;line-height:24px}
</style>
<x-icon class="w" name="weather" w="36" h="34"></x-icon>
<div class="mid"><task-item icon="win" label="Start"></task-item><label class="s"><x-icon name="mag" w="23"></x-icon><input aria-label="Search" placeholder="Search"><x-icon name="hills" w="72" h="34"></x-icon></label>
<task-item icon="taskview" label="Task view"></task-item><task-item icon="teams" label="Teams"></task-item><task-item icon="folder" label="File Explorer" run></task-item><task-item icon="edge" label="Edge"></task-item><task-item icon="store" label="Microsoft Store"></task-item><task-item icon="vscode" label="Visual Studio Code"></task-item><task-item icon="snap" label="Snapchat"></task-item><task-item icon="brave" label="Brave" boxed run="wide" w="30"></task-item><task-item icon="settings" label="Settings" run></task-item><task-item icon="telegram" label="Telegram" boxed run="alert" red="..05"></task-item><task-item icon="whatsapp" label="WhatsApp" run badge="99+"></task-item></div>
<div class="tray"><x-icon name="up" w="18" h="12"></x-icon><x-icon name="wifi" w="24" h="20"></x-icon><x-icon name="vol" w="25" h="20"></x-icon><x-icon name="batt" w="24" h="20"></x-icon><div class="clock"><div>4:46 PM</div><div>11/23/2023</div></div><x-icon name="bell" w="20" h="24"></x-icon></div>`);
</script>
</body>
</html>
